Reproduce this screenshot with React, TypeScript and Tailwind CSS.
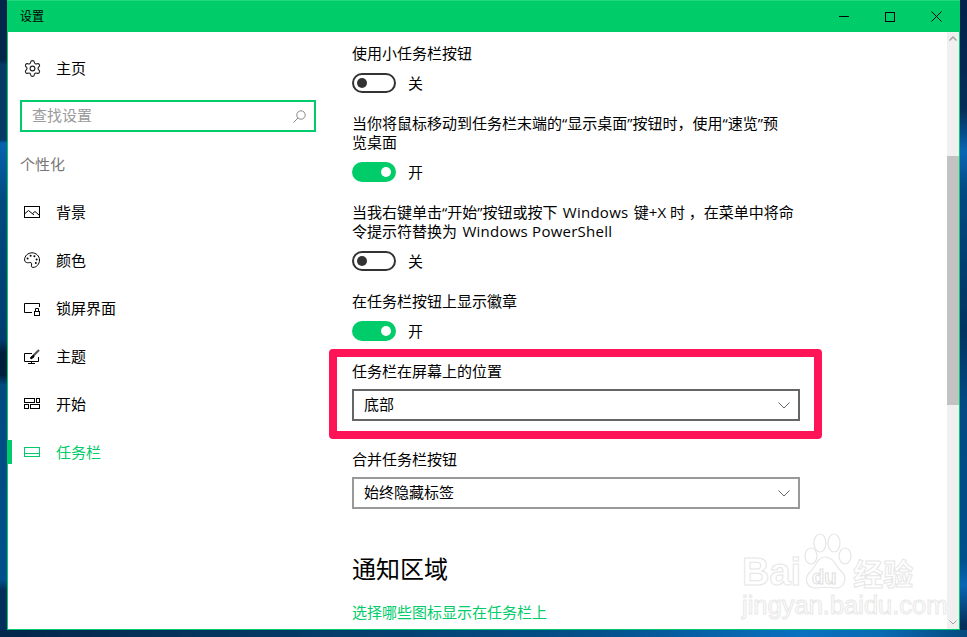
import { Settings } from "lucide-react";

const font = "[font-family:'Open_Sans','Noto_Sans_CJK_SC',sans-serif]";

function PictureIcon() {
  return (
    <svg width="16" height="16" viewBox="0 0 16 16" fill="none" stroke="currentColor" strokeWidth="1">
      <rect x="0.5" y="2.5" width="15" height="11" />
      <path d="M1 9.5 L4.5 6.5 L10 11 M8.5 9.5 L11 7.5 L15 11" />
    </svg>
  );
}

function PaletteIcon() {
  return (
    <svg width="16" height="16" viewBox="0 0 16 16" fill="none" stroke="currentColor" strokeWidth="1">
      <path d="M8 0.8 C12 0.8 15.5 4 15.5 8 C15.5 12.2 12.5 15.4 9 15.4 C7.5 15.4 7 14.2 7.5 13 C8 11.5 7.5 10.5 6 10.5 C4 11 0.9 11 0.6 8 C0.4 4 4 0.8 8 0.8 Z" />
      <g fill="currentColor" stroke="none">
        <circle cx="3.6" cy="6.4" r="1" />
        <circle cx="6.6" cy="3.8" r="1" />
        <circle cx="10.4" cy="4.2" r="1" />
        <circle cx="12.6" cy="7.4" r="1" />
        <circle cx="11.8" cy="11" r="1" />
      </g>
    </svg>
  );
}

function LockIcon() {
  return (
    <svg width="16" height="16" viewBox="0 0 16 16" fill="none" stroke="currentColor" strokeWidth="1">
      <path d="M8 12.5 H0.5 V3.5 H15.5 V7" />
      <rect x="10.5" y="11.5" width="5" height="4" />
      <path d="M11.5 11.5 V8.5 H14.5 V11.5" />
    </svg>
  );
}

function ThemeIcon() {
  return (
    <svg width="16" height="16" viewBox="0 0 16 16" fill="none" stroke="currentColor" strokeWidth="1">
      <path d="M8 5.5 H0.5 V13.5 H14.5 V9" />
      <path d="M7.5 13.5 V15.5 M4 15.5 H11" />
      <path d="M15 2 L9.5 7.5" stroke="#555555" strokeWidth="2.2" />
      <path d="M9.5 7 L10 9 L7 11 L6.5 9.5 Z" fill="currentColor" />
    </svg>
  );
}

function StartIcon() {
  return (
    <svg width="16" height="16" viewBox="0 0 16 16" fill="none" stroke="currentColor" strokeWidth="1">
      <rect x="0.5" y="2.5" width="10" height="4" />
      <rect x="12.5" y="2.5" width="3" height="4" />
      <rect x="0.5" y="8.5" width="4" height="4" />
      <rect x="6.5" y="8.5" width="9" height="4" />
    </svg>
  );
}

function TaskbarIcon() {
  return (
    <svg width="16" height="16" viewBox="0 0 16 16" fill="none" stroke="currentColor" strokeWidth="1">
      <rect x="0.5" y="3.5" width="15" height="9" />
      <path d="M0.5 9.5 H15.5" />
    </svg>
  );
}

function NavRow({ icon, label, active }: { icon: React.ReactNode; label: string; active?: boolean }) {
  return (
    <div className={`relative flex h-12 items-center pl-4 ${active ? "text-[#00cc6a]" : "text-black"}`}>
      {active && <div className="absolute left-0 top-3 h-6 w-1 bg-[#00cc6a]" />}
      <span className="flex w-8 shrink-0">{icon}</span>
      <span className="text-[15px] leading-5">{label}</span>
    </div>
  );
}

function Toggle({ on, className }: { on: boolean; className: string }) {
  return (
    <div className={`flex h-5 items-center ${className}`}>
      {on ? (
        <div className="flex h-5 w-11 items-center justify-end rounded-full bg-[#00cc6a] pr-[5px]">
          <div className="h-[10px] w-[10px] rounded-full bg-white" />
        </div>
      ) : (
        <div className="flex h-5 w-11 items-center rounded-full border-2 border-[#333333] pl-[3px]">
          <div className="h-[10px] w-[10px] rounded-full bg-[#333333]" />
        </div>
      )}
      <span className="ml-3 text-[15px] leading-5 text-black">{on ? "开" : "关"}</span>
    </div>
  );
}

function Label({ children, className }: { children: React.ReactNode; className: string }) {
  return <p className={`text-[15px] leading-[19px] text-black ${className}`}>{children}</p>;
}

function En({ children }: { children: React.ReactNode }) {
  return <span className="mx-[1.5px] tracking-[0.25px]">{children}</span>;
}

function Dropdown({ value, className }: { value: string; className: string }) {
  return (
    <div className={`flex h-8 w-[448px] items-center justify-between border-2 pl-[10px] pr-2 ${className}`}>
      <span className="pb-[2px] text-[15px] leading-5 text-black">{value}</span>
      <svg width="12" height="7" viewBox="0 0 12 7" fill="none" stroke="#666666" strokeWidth="1">
        <path d="M0.5 0.5 L6 6 L11.5 0.5" />
      </svg>
    </div>
  );
}

function Watermark() {
  return (
    <div className="absolute left-[742px] top-[533px] w-[176px] text-white">
      <div className="relative flex h-[59px] items-end">
        <span className="text-[38px] font-bold leading-[40px] text-white [-webkit-text-stroke:1px_#e6e6e6] [font-family:'Liberation_Sans',sans-serif]">
          Bai
        </span>
        <svg className="ml-px" width="50" height="59" viewBox="4 0 50 59" fill="white" stroke="#e6e6e6" strokeWidth="1.2">
          <ellipse cx="13" cy="23" rx="6" ry="8" />
          <ellipse cx="22" cy="10" rx="6" ry="9" />
          <ellipse cx="36" cy="10" rx="6" ry="9" />
          <ellipse cx="47" cy="23" rx="6" ry="8" />
          <path d="M27 24 C36 24 38 34 44 39 C50 45 46 56 37 55 C31 54 25 54 19 55 C9 56 5 46 12 39 C18 34 19 24 27 24 Z" />
        </svg>
        <span className="absolute left-[70px] top-[34px] text-[20px] font-bold leading-5 text-white [-webkit-text-stroke:1px_#e0e0e0] [font-family:'Liberation_Sans',sans-serif]">
          du
        </span>
        <span className="ml-px text-[30px] font-bold leading-[36px] text-white [-webkit-text-stroke:1px_#e6e6e6]">
          经验
        </span>
      </div>
      <div className="mt-[1px] whitespace-nowrap text-[25.5px] leading-[24px] text-white [-webkit-text-stroke:1px_#e8e8e8] [font-family:'Liberation_Sans',sans-serif]">
        jingyan.baidu.com
      </div>
    </div>
  );
}

export default function App() {
  return (
    <div className={`relative flex h-[637px] w-[967px] flex-col overflow-hidden ${font}`}>
      <div className="flex h-[630px]">
        {/* Desktop, left */}
        <div className="w-[7px] bg-[linear-gradient(180deg,#03264a_0,#03264a_60px,#053a66_65px,#053a66_140px,#0a62ae_143px,#004a80_200px,#003d6f_340px,#001f3d_352px,#001f3d_375px,#004a80_385px,#00508c_580px,#03305a_590px,#03305a_100%)]" />

        {/* Window */}
        <div className="flex w-[953px] flex-col border-x border-b border-[#00cc6a] bg-white">
          <div className="-mx-px flex h-8 shrink-0 items-center justify-between border-t border-[#20d880] bg-[#00cc6a] pl-3 pr-px">
            <span className="pl-[1px] text-[12px] leading-4 text-black">设置</span>
            <div className="flex items-center">
              <button className="flex h-[31px] w-[46px] items-center justify-center">
                <div className="h-px w-[10px] bg-black" />
              </button>
              <button className="flex h-[31px] w-[46px] items-center justify-center">
                <div className="h-[10px] w-[10px] border border-black" />
              </button>
              <button className="flex h-[31px] w-[46px] items-center justify-center">
                <svg width="11" height="11" viewBox="0 0 11 11" stroke="black" strokeWidth="1">
                  <path d="M0.5 0.5 L10.5 10.5 M10.5 0.5 L0.5 10.5" />
                </svg>
              </button>
            </div>
          </div>

          <div className="flex min-h-0 flex-1">
            {/* Sidebar */}
            <div className="w-[344px] shrink-0 pt-3">
              <NavRow icon={<Settings size={19} strokeWidth={1.4} className="-ml-[1.5px] text-[#222]" />} label="主页" />
              <div className="ml-3 mt-2 flex h-8 w-[296px] items-center justify-between border-2 border-[#00cc6a] pl-[10px] pr-2">
                <span className="pb-[2px] text-[15px] leading-5 text-[#9a9a9a]">查找设置</span>
                <svg width="13" height="13" viewBox="0 0 13 13" fill="none" stroke="#8a8a8a" strokeWidth="1">
                  <circle cx="8" cy="5" r="4.2" />
                  <path d="M5 8 L0.5 12.5" />
                </svg>
              </div>
              <p className="ml-3 mt-[22px] text-[15px] leading-5 text-[#767676]">个性化</p>
              <div className="mt-[14px]">
                <NavRow icon={<PictureIcon />} label="背景" />
                <NavRow icon={<PaletteIcon />} label="颜色" />
                <NavRow icon={<LockIcon />} label="锁屏界面" />
                <NavRow icon={<ThemeIcon />} label="主题" />
                <NavRow icon={<StartIcon />} label="开始" />
                <NavRow icon={<TaskbarIcon />} label="任务栏" active />
              </div>
            </div>

            {/* Content */}
            <div className="flex min-w-0 flex-1 flex-col items-start overflow-hidden pt-3">
              <Label className="">使用小任务栏按钮</Label>
              <Toggle on={false} className="mt-[10px]" />
              <Label className="mt-[21px]">
                当你将鼠标移动到任务栏末端的“显示桌面”按钮时，使用“速览”预
                <br />
                览桌面
              </Label>
              <Toggle on className="mt-[10px]" />
              <Label className="mt-[21px]">
                当我右键单击“开始”按钮或按下 <En>Windows</En> 键+X 时 ，在菜单中将命
                <br />
                令提示符替换为 <En>Windows PowerShell</En>
              </Label>
              <Toggle on={false} className="mt-[10px]" />
              <Label className="mt-[21px]">在任务栏按钮上显示徽章</Label>
              <Toggle on className="mt-[10px]" />
              <Label className="mt-[21px]">任务栏在屏幕上的位置</Label>
              <Dropdown value="底部" className="mt-2 border-[#666666]" />
              <Label className="mt-[29px]">合并任务栏按钮</Label>
              <Dropdown value="始终隐藏标签" className="mt-2 border-[#999999]" />
              <h2 className="mt-[44px] text-[24px] font-normal leading-8 text-black">通知区域</h2>
              <a className="mt-[18px] text-[15px] leading-[19px] text-[#00cc6a]">选择哪些图标显示在任务栏上</a>
            </div>

            {/* Scrollbar */}
            <div className="flex w-3 shrink-0 flex-col bg-[#f0f0f0]">
              <div className="flex h-[12px] items-center justify-center">
                <svg width="8" height="5" viewBox="0 0 8 5" fill="none" stroke="#a0a0a0" strokeWidth="1.4">
                  <path d="M0.5 4.5 L4 1 L7.5 4.5" />
                </svg>
              </div>
              <div className="h-[112px]" />
              <div className="h-[249px] bg-[#c2c2c2]" />
              <div className="flex-1" />
              <div className="flex h-[14px] items-center justify-center">
                <svg width="8" height="5" viewBox="0 0 8 5" fill="none" stroke="#a0a0a0" strokeWidth="1">
                  <path d="M0.5 0.5 L4 4 L7.5 0.5" />
                </svg>
              </div>
            </div>
          </div>
        </div>

        {/* Desktop, right */}
        <div className="w-[7px] bg-[linear-gradient(180deg,#02224a_0,#032e58_110px,#0a66b4_152px,#024a82_190px,#013460_330px,#024a82_400px,#00508c_560px,#0a66b4_585px,#03305a_625px)]" />
      </div>

      {/* Desktop, bottom */}
      <div className="h-[7px] bg-[linear-gradient(90deg,#03264a_0,#053a66_300px,#04508c_600px,#0a70c0_800px,#0a6ab4_880px,#064a80_967px)]" />

      {/* Highlight marker */}
      <div className="absolute left-[329px] top-[349px] h-[90px] w-[493px] rounded-[4px] border-[8px] border-[#ff1458]" />

      <Watermark />
    </div>
  );
}
